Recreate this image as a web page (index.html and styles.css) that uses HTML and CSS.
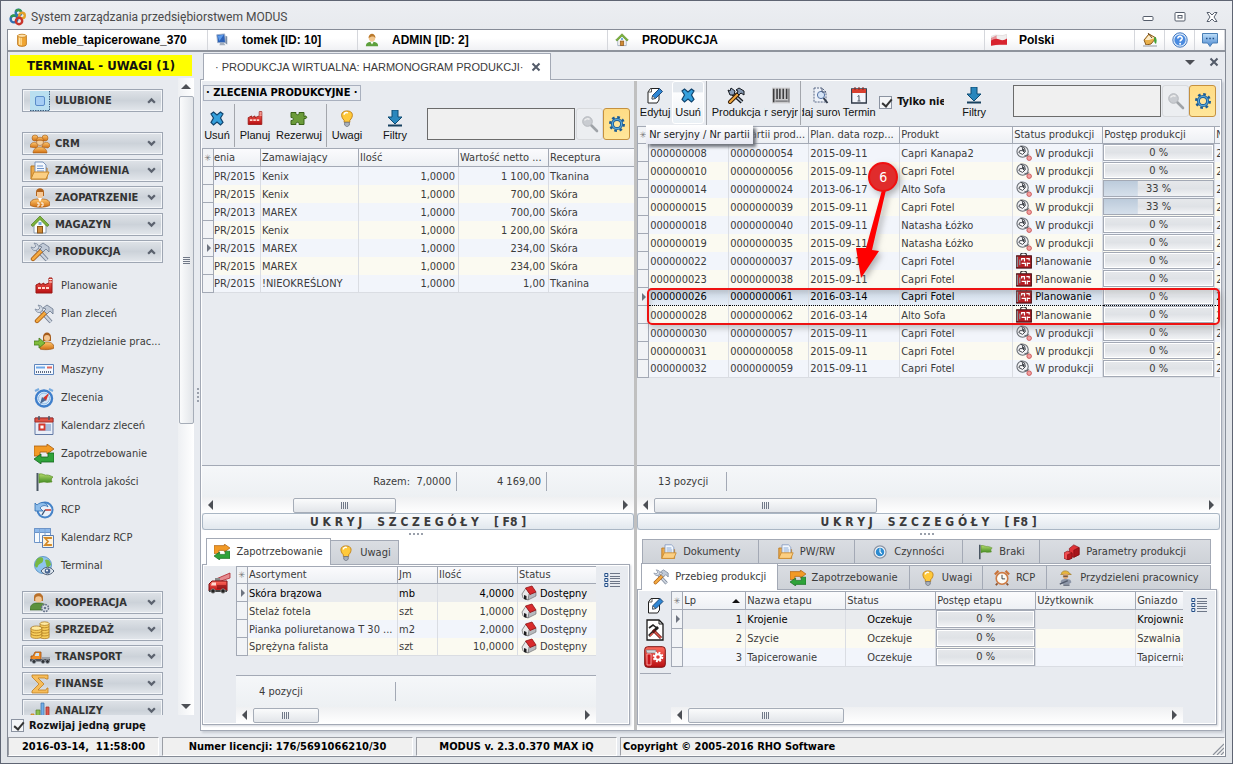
FILE: index.html
```html
<!DOCTYPE html>
<html lang="pl">
<head>
<meta charset="utf-8">
<title>System zarządzania przedsiębiorstwem MODUS</title>
<link rel="stylesheet" href="styles.css">
</head>
<body>
<svg class="defs" aria-hidden="true">
<defs>
<linearGradient id="gO" x1="0" y1="0" x2="0" y2="1"><stop offset="0" stop-color="#ffc870"/><stop offset="1" stop-color="#cf6d10"/></linearGradient>
<linearGradient id="gB" x1="0" y1="0" x2="0" y2="1"><stop offset="0" stop-color="#bfe0fa"/><stop offset="1" stop-color="#4a86cf"/></linearGradient>
<linearGradient id="gR" x1="0" y1="0" x2="0" y2="1"><stop offset="0" stop-color="#ff6a5c"/><stop offset="1" stop-color="#b80f12"/></linearGradient>
<linearGradient id="gG" x1="0" y1="0" x2="0" y2="1"><stop offset="0" stop-color="#b4d96a"/><stop offset="1" stop-color="#3f8a22"/></linearGradient>
</defs>
<symbol id="logo" viewBox="0 0 18 18"><g fill="none" stroke-width="2.4"><circle cx="5" cy="11" r="3.4" stroke="#2c6fb3"/><path d="M2 9a3.6 3.6 0 0 1 5-1" stroke="#2f9a4a"/><circle cx="9.500" cy="4.600" r="2.800" stroke="#2f78b0"/><path d="M7 3.500a2.800 2.800 0 0 1 5 0" stroke="#3a9a45"/><circle cx="13" cy="7.500" r="2.800" stroke="#e2a12a"/><circle cx="10" cy="13" r="3.200" stroke="#c8352c"/></g></symbol>
<symbol id="db" viewBox="0 0 16 16"><path d="M3 3v10c0 3 10 3 10 0V3z" fill="#f0a532" stroke="#b9731a"/><path d="M5 4v9.500M7 4v10" stroke="#ffe2a0" stroke-width="1.500"/><ellipse cx="8" cy="3.200" rx="5" ry="1.800" fill="#ffe3ae" stroke="#c98625"/></symbol>
<symbol id="monitor" viewBox="0 0 16 16"><path d="M2 2l9-1 1 10-9 0z" fill="#2d62b8" stroke="#9fb0c8"/><path d="M3 3l7-1-5 7z" fill="#5d9bea"/><path d="M12 3l2 1v9l-2-1z" fill="#7d8ea6"/><path d="M6 11h4l2 3H5z" fill="#a4aebd"/></symbol>
<symbol id="user" viewBox="0 0 16 16"><path d="M1 15c0-4 3-5 7-5s7 1 7 5z" fill="#5da03c"/><path d="M6 10h4l-2 3z" fill="#fff"/><circle cx="8" cy="6" r="3.600" fill="#f2c78f"/><path d="M4 6c0-7 8-7 8 0-2-3-5-2-8 0z" fill="#b9792c"/></symbol>
<symbol id="home" viewBox="0 0 20 20"><path d="M4 9v9h12V9l-6-6z" fill="#fdfdfb" stroke="#8a9bb0"/><path d="M1 10l9-9 9 9-2 1.500-7-7-7 7z" fill="#7cb23a" stroke="#4c7d1e" stroke-width=".7"/><rect x="7.500" y="11.500" width="5" height="6.500" fill="#cf8a35" stroke="#8a5519"/><rect x="8.500" y="7" width="3" height="3" fill="#78aee2"/></symbol>
<symbol id="pl" viewBox="0 0 17 12"><path d="M.5 2q4-2 8-1t8-1v11q-4 0-8 0t-8 1z" fill="#f0eeee" stroke="#d8cfcf" stroke-width=".6"/><path d="M0 6.500q5-3 9-1t8-1V11q-4 0-8 0t-9 1z" fill="#d8232e"/><path d="M0 4l6-3v4l-6 2z" fill="#d8232e" opacity=".45"/></symbol>
<symbol id="paint" viewBox="0 0 16 16"><path d="M2 8l5-6 7 4-5 6-5 1z" fill="#e9b04a" stroke="#8a5a1b"/><path d="M3 8l4-5 6 3-6 2z" fill="#fbeccb"/><path d="M12 5c3 0 3 4 2 7-2-1-2-3-2-7z" fill="#44a338"/><path d="M6 1l4 5" stroke="#6b4a23"/><path d="M1 14h14" stroke="#c5c8cd" stroke-width="2"/></symbol>
<symbol id="help" viewBox="0 0 16 16"><circle cx="8" cy="8" r="7.200" fill="#dcebfa" stroke="#4277bf"/><circle cx="8" cy="8" r="5.600" fill="#4b8be0"/><path d="M5.800 6.500c0-3 4.600-2.600 4.400 0-.1 1.500-2.100 1.500-2.100 3" fill="none" stroke="#fff" stroke-width="1.600"/><circle cx="8.100" cy="11.700" r="1" fill="#fff"/></symbol>
<symbol id="chat" viewBox="0 0 16 16"><path d="M.5 1.500h15v9.500h-5l-2.500 3.500L5.500 11h-5z" fill="url(#gB)" stroke="#4a7fb5"/><path d="M4 6.500h1.500M7.300 6.500h1.500M10.600 6.500h1.500" stroke="#1f4f86" stroke-width="1.600"/></symbol>
<symbol id="square" viewBox="0 0 20 20"><rect width="20" height="20" fill="#b9dff0"/><path d="M0 19.500h20M19.500 0v20" stroke="#3d5d80" stroke-dasharray="1.500 1"/><rect x="5.500" y="5.500" width="9" height="9" rx="1.500" fill="#a5cdf4" stroke="#5a8cc9"/></symbol>
<symbol id="people" viewBox="0 0 20 20"><g fill="url(#gO)" stroke="#a35a18" stroke-width=".6"><circle cx="5" cy="4" r="3"/><circle cx="15" cy="4" r="3"/><path d="M0 13c0-6 8-6 8-1l-2 2zM12 13c0-6 8-6 8-1l-2 2z"/><circle cx="10" cy="8" r="3.500" fill="#f4cf9d"/><path d="M6 7c0-5 8-5 8 0-3-1-5-1-8 0z"/><path d="M3 19c0-8 14-8 14 0z"/></g></symbol>
<symbol id="folder" viewBox="0 0 20 20"><path d="M1 5h5l1 2h10v11H1z" fill="#e9a94c" stroke="#b9771c"/><path d="M5 1h8l3 3v10H5z" fill="#f4f8fd" stroke="#7d96bd"/><path d="M7 5h6M7 7.500h7M7 10h7" stroke="#6f94cc"/><path d="M1 18l3-7h15l-3 7z" fill="#fbcf83" stroke="#c9882b"/></symbol>
<symbol id="boxman" viewBox="0 0 20 20"><path d="M6 4c0-5 8-5 8 0v4H6z" fill="#b2641d"/><path d="M7 4h6v4c0 3-6 3-6 0z" fill="#f6c895"/><path d="M0 17c0-6 5-6 10-6s10 0 10 6c-3 3-17 3-20 0z" fill="url(#gO)" stroke="#a35a18" stroke-width=".7"/><path d="M8 10h4l-2 4z" fill="#fff"/><path d="M7 15h2v3H7M11 15h2v3h-2" stroke="#fff" fill="none"/></symbol>
<symbol id="tools" viewBox="0 0 20 20"><path d="M5 5l12 13" stroke="#6e7a8e" stroke-width="4"/><path d="M5 5l12 13" stroke="#cdd4de" stroke-width="2.400"/><path d="M1 5q2 5 6 3l2-3q-1-4-5-4l2 3-2 2z" fill="#d3dae4" stroke="#7c899d" stroke-width=".8"/><path d="M12 8l-9 9" stroke="#a55a12" stroke-width="4.400" stroke-linecap="round"/><path d="M12 8l-9 9" stroke="#f3a940" stroke-width="2.800" stroke-linecap="round"/><path d="M9 4l4-3 6 4v5l-3-3-3 3-3-3 2-2z" fill="#c1cad7" stroke="#69778d" stroke-width=".8"/></symbol>
<symbol id="toolsdark" viewBox="0 0 18 17"><path d="M4 5l11 10" stroke="#15181d" stroke-width="4"/><path d="M4 5l11 10" stroke="#b9c4d2" stroke-width="1.600"/><path d="M1 3l2 1 1-3 4 3-1 4-4 0z" fill="#8fa3bd" stroke="#15181d"/><path d="M11 7l-8 8" stroke="#3b2006" stroke-width="4" stroke-linecap="round"/><path d="M11 7l-8 8" stroke="#f3a940" stroke-width="2" stroke-linecap="round"/><path d="M9 3l3-2 5 3v4l-3-2-2 2-2-2 1-2z" fill="#8497b0" stroke="#15181d"/></symbol>
<symbol id="coop" viewBox="0 0 20 20"><path d="M10 0l3 4-5-1z" fill="#b56a20"/><path d="M4 4c0-5 9-5 9 1v3H4z" fill="#b9702a"/><circle cx="8.500" cy="6.500" r="3.300" fill="#f2c694"/><path d="M0 17c0-7 5-7 9-7s8 1 8 7z" fill="#5c913c" stroke="#36661f" stroke-width=".6"/><circle cx="15" cy="15" r="3.500" fill="#dce1e8" stroke="#66738a" stroke-width="1.600" stroke-dasharray="1.800 .9"/><circle cx="15" cy="15" r="1.300" fill="#6a7890"/></symbol>
<symbol id="coins" viewBox="0 0 22 20"><g fill="#f7cd5c" stroke="#a8741a" stroke-width=".8"><path d="M11 3v15c0 2 10 2 10 0V3z"/><ellipse cx="16" cy="3" rx="5" ry="2" fill="#ffeaa0"/><path d="M11 6c1 2 9 2 10 0M11 9c1 2 9 2 10 0M11 12c1 2 9 2 10 0M11 15c1 2 9 2 10 0" fill="none"/><path d="M1 8v9c0 3 12 3 12 0V8z"/><ellipse cx="7" cy="8" rx="6" ry="2.400" fill="#ffeaa0"/><path d="M1 11c1 3 11 3 12 0M1 14c1 3 11 3 12 0" fill="none"/></g></symbol>
<symbol id="truck" viewBox="0 0 20 20"><path d="M1 9h2l2-4h6v8H1z" fill="#ef8c25" stroke="#9c4d10" stroke-width=".8"/><path d="M5 8l1-2h3v3H5z" fill="#cfe4f4"/><path d="M0 12h20v2.500H0z" fill="#50545c"/><path d="M12 11h8" stroke="#8b9099" stroke-width="1.500"/><g fill="#2f3338" stroke="#9ba1aa" stroke-width=".8"><circle cx="4" cy="14.500" r="2"/><circle cx="13" cy="14.500" r="2"/><circle cx="17.500" cy="14.500" r="2"/></g></symbol>
<symbol id="sigma" viewBox="0 0 20 20"><path d="M2 1h16v4h-2l-1-1H8l6 6-6 6h8l1-2h1v5H2v-2l7-7-7-7z" fill="#f6bd5b" stroke="#c07d20" stroke-width=".8"/></symbol>
<symbol id="chart" viewBox="0 0 20 20"><g stroke-width=".7"><path d="M1 13h3v7H1z" fill="#f0b040" stroke="#b87a18"/><path d="M6 9h4v11H6z" fill="#8dc04c" stroke="#55822a"/><path d="M11 2h3v18h-3z" fill="#74b0e8" stroke="#3a6ea8"/><path d="M16 6h3v14h-3z" fill="#dd5a50" stroke="#a0241e"/></g></symbol>
<symbol id="factory" viewBox="0 0 20 20"><path d="M2 17V9l4-2v2l4-2v2l5-2V2h3v15z" fill="url(#gR)" stroke="#9a1612"/><path d="M4 12h11" stroke="#ffd6cc" stroke-width="2" stroke-dasharray="3 1"/><path d="M15 3.500h3M15 6h3" stroke="#ffe6e0"/></symbol>
<symbol id="userarrow" viewBox="0 0 20 20"><path d="M9 5c0-6 8-6 8 0v4H9z" fill="#a65c1c"/><circle cx="13" cy="6" r="3" fill="#f4c591"/><path d="M6 17c0-7 4-7 7-7s7 1 7 6c-2 2-12 2-14 1z" fill="url(#gO)" stroke="#9c5618" stroke-width=".7"/><path d="M0 9h5V6l6 5-6 5v-3H0z" fill="#80bc3c" stroke="#43781a" stroke-width=".8"/></symbol>
<symbol id="machine" viewBox="0 0 20 20"><path d="M.5 4.500h19v10H.5z" fill="#f4f8fe" stroke="#5f86bd"/><path d="M2 7.500h9" stroke="#6ea8e8" stroke-width="2"/><path d="M13 7.500h5" stroke="#e0695e" stroke-width="2"/><path d="M2 12h15" stroke="#2d3c58" stroke-width="1.500" stroke-dasharray="1 1"/></symbol>
<symbol id="compass" viewBox="0 0 20 20"><circle cx="10" cy="10.500" r="8" fill="#eaf3fc" stroke="#3f7fcb" stroke-width="2.400"/><circle cx="10" cy="10.500" r="5.500" fill="#d3e6f8" stroke="#8bb8e5"/><path d="M15 5l-3 8-3-3z" fill="#d93328"/><path d="M6 16l2-7 4 3z" fill="#4a6893"/><path d="M1 3l4-2M15 1l4 2" stroke="#77abdf" stroke-width="2"/></symbol>
<symbol id="cal" viewBox="0 0 20 20"><path d="M1 2h18v16.500H1z" fill="#e8eef8" stroke="#6279a5"/><path d="M1 2h18v4H1z" fill="#de5245" stroke="#a92e26"/><path d="M5 0v4M15 0v4" stroke="#4c5564" stroke-width="1.500"/><path d="M4 8h13v7H4z" fill="#a8bbda"/><path d="M5.500 8.500h5v5h-5z" fill="#fff" stroke="#d5382d" stroke-width="1.800"/></symbol>
<symbol id="swap" viewBox="0 0 20 20"><path d="M0 12V2h13V0l7 5-7 5V8H6v4z" fill="#f29a26" stroke="#a75c0c" stroke-width=".8"/><path d="M20 9v9H7v2l-7-5 7-5v3h7V9z" fill="#2fa33a" stroke="#14661d" stroke-width=".8"/></symbol>
<symbol id="flag" viewBox="0 0 20 20"><path d="M3.500 1v18" stroke="#4a5663" stroke-width="2"/><path d="M5 2c4-1 6 2 8 1 2 0 4 1 6 2-2 1-2 3-1 5-3 0-5 1-7 0-2 0-4 0-6 1z" fill="url(#gG)" stroke="#5a8f28" stroke-width=".7"/></symbol>
<symbol id="rcp" viewBox="0 0 20 20"><circle cx="11" cy="10" r="7.500" fill="#e9f1fa" stroke="#4583c8" stroke-width="2"/><path d="M11 10h6" stroke="#c8382e" stroke-width="1.500"/><path d="M11 10l-3 5" stroke="#3d5778" stroke-width="1.400"/><path d="M1 3v8h8L6 8c2-3 6-3 8-1-1-5-7-6-11-2z" fill="#8dbdeb" stroke="#2f6cb0" stroke-width=".8"/></symbol>
<symbol id="tsum" viewBox="0 0 20 20"><path d="M.5.500h16v14H.5z" fill="#f7fafd" stroke="#6d94c8"/><path d="M.5.500h16v4H.500z" fill="#8db8ea" stroke="#6d94c8"/><path d="M5.500 1v13M11 1v13" stroke="#7fa5d4"/><path d="M8.500 7.500h11v12h-11z" fill="#fdf3df" stroke="#5a7db2"/><path d="M17 11v-1h-6l3 3.500-3 3.500h6v-1" fill="none" stroke="#d48a28" stroke-width="1.800"/></symbol>
<symbol id="globe" viewBox="0 0 20 20"><circle cx="9" cy="9" r="8.500" fill="#8ec4ee" stroke="#4d88be" stroke-width=".8"/><path d="M4 2c4-2 6 0 5 3s-4 2-5 5-3 1-3-1 1-5 3-7zM11 4c3-2 6 2 6 5l-4 3z" fill="#77b843"/><path d="M7 15c4-5 9-5 13 0-4 5-9 5-13 0z" fill="#dfe7ef" stroke="#4c5d73"/><circle cx="13.500" cy="15" r="2.800" fill="#4a6792"/><circle cx="13" cy="14.500" r="1" fill="#fff"/></symbol>
<symbol id="xblue" viewBox="0 0 18 17"><path d="M3 4l2.500-2 3.500 3 3.500-3L15 4l-2.500 4L15 12.500 12.500 15 9 12l-3.500 3L3 12.500 5.500 8z" fill="#35a0dc" stroke="#11456f" stroke-width="1.200"/></symbol>
<symbol id="puzzle" viewBox="0 0 18 16"><path d="M1 2h5c-1 3 4 3 3 0h5v4c3-2 4 3 0 2v6H9c1-3-4-3-3 0H1v-4c3 1 3-4 0-3z" fill="#6b9b3a" stroke="#3b6219"/></symbol>
<symbol id="bulb" viewBox="0 0 16 18"><path d="M8 1c7 0 7 6 3 10v2H5v-2C1 7 1 1 8 1z" fill="#ffc93a" stroke="#c07f14"/><path d="M5 5c0-2 2-3 4-2" stroke="#fff" stroke-width="1.600" fill="none"/><path d="M5.500 13h5v3l-2 1.500h-1L5.500 16z" fill="#a9b0bb" stroke="#666d78" stroke-width=".8"/></symbol>
<symbol id="filter" viewBox="0 0 16 17"><path d="M5 0h6v7h4l-7 7-7-7h4z" fill="#2a87bd" stroke="#0d4a72"/><path d="M1 15.500h14" stroke="#17415f" stroke-width="1.800"/></symbol>
<symbol id="search" viewBox="0 0 18 18"><path d="M10 10l6 6" stroke="#9fa3a8" stroke-width="2.600" stroke-linecap="round"/><circle cx="6.500" cy="6.500" r="4.800" fill="#c9ccd1" stroke="#b5b8bd"/><path d="M3.500 5.500c1-2 4-2 5-1" stroke="#eee" fill="none" stroke-width="1.500"/></symbol>
<symbol id="gear" viewBox="0 0 18 18"><circle cx="9" cy="9" r="6.800" fill="none" stroke="#1c5c93" stroke-width="2.400" stroke-dasharray="2.700 2.640"/><circle cx="9" cy="9" r="4.600" fill="#ffe49a" stroke="#1e5f99" stroke-width="3"/><circle cx="9" cy="9" r="4.600" fill="none" stroke="#57a8dc" stroke-width="1.200"/></symbol>
<symbol id="edit" viewBox="0 0 17 17"><path d="M4 1.500h8.500V13l-2 3H1.500V5z" fill="#fff" stroke="#202020"/><path d="M1.500 5H5V1.500" fill="none" stroke="#555"/><path d="M6 8.500l7-7 3 3-7 7-3.500.6z" fill="#2f86d3" stroke="#123e70" stroke-width=".9"/><path d="M5.500 12l.6-3 2.500 2.500z" fill="#fff" stroke="#333" stroke-width=".6"/></symbol>
<symbol id="barcode" viewBox="0 0 16 14"><rect width="16" height="14" fill="#c9c9cb"/><path d="M1.500 1v12M4.500 1v9M7 1v9M10 1v9M13 1v9" stroke="#3c3c3e" stroke-width="1.400"/><path d="M15 1v12M3 12h11" stroke="#707074"/></symbol>
<symbol id="docsearch" viewBox="0 0 16 17"><path d="M1 1h8l4 4v10H1z" fill="#edf1f8" stroke="#5a6985" stroke-dasharray="2 1"/><circle cx="8" cy="8" r="3.600" fill="#d5e4f6" stroke="#5573a4"/><path d="M10.500 11l4 5" stroke="#333d4d" stroke-width="2"/><path d="M9 1v4h4" fill="none" stroke="#4a5670"/></symbol>
<symbol id="cal1" viewBox="0 0 16 17"><path d="M.7 2h14.600v14H.7z" fill="#f4f6fb" stroke="#2d3746" stroke-width="1.300"/><path d="M1 2h14v4H1z" fill="#d8402f"/><path d="M4 0v3M8 0v3M12 0v3" stroke="#8c1d14"/><path d="M6.500 9.500L8 8.500V14M6.500 14h3" stroke="#4a5463" fill="none"/></symbol>
<symbol id="wrench" viewBox="0 0 17 17"><circle cx="7" cy="7" r="6" fill="#f1f2f5" stroke="#6c7178" stroke-width="1.200"/><path d="M5 1l4 2 1 4-3 3-4-2 1-2 3 0 0-3z" fill="#fff" stroke="#3a3e45"/><path d="M7 4.500q2 1 1 3" stroke="#3f434a" stroke-width="1.800" fill="none"/><path d="M9 11q2 2 5-1" fill="none" stroke="#55595f"/><circle cx="14" cy="14" r="2.400" fill="#f2a0a0" stroke="#c95858"/></symbol>
<symbol id="plan" viewBox="0 0 17 17"><path d="M5 3V1q3-2 6 0v2" fill="none" stroke="#333" stroke-width="1.200"/><rect x=".7" y="3" width="15.600" height="13" fill="#b51e24" stroke="#4b1014" stroke-width="1.200"/><path d="M1.500 4v11M4 7v6" stroke="#8b8f96" stroke-width="1.500"/><path d="M6 8V6h3v3M11 6h3v2M6 11h4v3M12 10v4M12 11h3" fill="none" stroke="#fff" stroke-width="1.300"/></symbol>
<symbol id="house" viewBox="0 0 16 16"><path d="M1 9l4-6 4 6-2 6-5-2z" fill="#e9e9ea" stroke="#666" stroke-width=".7"/><path d="M8 9l7-2v4l-8 4z" fill="#b7babf" stroke="#666" stroke-width=".6"/><path d="M4.500 3L11 1l4 6-6 2.500z" fill="#d82b2d" stroke="#8f1316" stroke-width=".8"/><path d="M3 10l2.500 1v4L3 14z" fill="#1d1d1f"/></symbol>
<symbol id="fire" viewBox="0 0 24 22"><path d="M8 7L22 1v5L10 10z" fill="#e58a90" stroke="#b1262c" stroke-width=".8"/><path d="M7 6h5v5H7z" fill="#888"/><path d="M1 12l3-3h15v10H1z" fill="url(#gR)" stroke="#7c0d10"/><path d="M4 10.500h4v3H3z" fill="#ffd9d2"/><path d="M9 14h9M9 16h9" stroke="#6e090c"/><path d="M1 18h18v2H1z" fill="#444"/><circle cx="5" cy="19" r="2.200" fill="#222" stroke="#999" stroke-width=".8"/><circle cx="15" cy="19" r="2.200" fill="#222" stroke="#999" stroke-width=".8"/></symbol>
<symbol id="list" viewBox="0 0 16 16"><g fill="#e8f1fb" stroke="#234d86"><path d="M.8 1.500h3v3h-3zM.8 6.500h3v3h-3zM.8 11.500h3v3h-3z"/></g><path d="M6 1.500h10M6 4.500h10M6 6.500h10M6 9.500h10M6 11.500h10M6 14.500h10" stroke="#6e7788"/></symbol>
<symbol id="doctool" viewBox="0 0 18 22"><path d="M1 1h12l4 4v16H1z" fill="#fff" stroke="#1a1a1a" stroke-width="1.300"/><path d="M13 1v4h4" fill="none" stroke="#1a1a1a"/><path d="M3 17l9-9" stroke="#222" stroke-width="2.600"/><path d="M3 9l4-3 5 4" stroke="#222" stroke-width="1.600" fill="none"/><path d="M7 11l8 8" stroke="#601510" stroke-width="3"/><path d="M9 13l6 6M4 17l3-3" stroke="#e0564c" stroke-width="1.600"/></symbol>
<symbol id="redgear" viewBox="0 0 22 22"><rect x=".7" y=".7" width="20.600" height="20.600" rx="3" fill="url(#gR)" stroke="#7c1212"/><path d="M2 4h10v3H3z" fill="#d4d6da" stroke="#777" stroke-width=".6"/><path d="M3 8h4v11H3z" fill="#c8141a" stroke="#fbb" stroke-width=".8"/><circle cx="14" cy="11" r="4.200" fill="none" stroke="#fff" stroke-width="2.200" stroke-dasharray="1.800 1.500"/><circle cx="14" cy="11" r="2.800" fill="none" stroke="#fff" stroke-width="2"/></symbol>
<symbol id="alarm" viewBox="0 0 18 18"><path d="M1 5l4-4M17 5l-4-4" stroke="#c9743a" stroke-width="2.600"/><path d="M4 15l-2 2M14 15l2 2" stroke="#8a5330" stroke-width="2"/><circle cx="9" cy="9.500" r="6.500" fill="#fbfbf6" stroke="#ce7a42" stroke-width="1.800"/><path d="M9 5.500v4.500h3.500" fill="none" stroke="#333"/></symbol>
<symbol id="cubes" viewBox="0 0 18 18"><g stroke="#7c0c10" stroke-width=".7"><path d="M6 5l5-4 6 3v8l-6 3-5-3z" fill="#e03237"/><path d="M11 7l6-3v8l-6 3z" fill="#a8151b"/><path d="M0 10l4-2 5 2v6l-5 2-4-2z" fill="#f05053"/><path d="M4 12l5-2v6l-5 2z" fill="#b8181e"/></g></symbol>
<symbol id="worker" viewBox="0 0 18 18"><path d="M4 4c0-4 8-4 9 0l2 1H3z" fill="#e7b63a" stroke="#9c7418" stroke-width=".7"/><circle cx="8.500" cy="7" r="3" fill="#dba372"/><path d="M6 7h5" stroke="#333"/><path d="M3 14c0-4 4-4 6-4s6 0 6 4l-3 2H6z" fill="#8d96a8"/><path d="M2 16l9-4M6 17h7" stroke="#515a6c" stroke-width="1.500"/></symbol>
<symbol id="clock" viewBox="0 0 18 18"><circle cx="9" cy="9" r="6.800" fill="#f3f6fa" stroke="#8b95a5" stroke-width="1.400"/><circle cx="9" cy="9" r="4.800" fill="#2c8bd0"/><path d="M9 5v4l2 2" stroke="#fff" stroke-width="1.200" fill="none"/></symbol>
<symbol id="chev" viewBox="0 0 8 8"><path d="M1 2l3 3 3-3" fill="none" stroke="#5b626e" stroke-width="2"/></symbol>
<symbol id="close" viewBox="0 0 10 10"><path d="M1.500 1.500l7 7M8.500 1.500l-7 7" stroke="#535b69" stroke-width="2"/></symbol>
</svg>

<div class="window">
<header class="titlebar">
  <svg class="i18"><use href="#logo"/></svg><h1>System zarządzania przedsiębiorstwem MODUS</h1>
  <div class="winbtns">
    <button aria-label="Minimalizuj"><svg viewBox="0 0 12 12"><rect x="1" y="5.500" width="10" height="4" rx="1" fill="#fff" stroke="#555d6b"/></svg></button>
    <button aria-label="Maksymalizuj"><svg viewBox="0 0 12 12"><rect x="1" y="1.500" width="10" height="8.500" rx="1" fill="#fff" stroke="#555d6b"/><rect x="4" y="4.500" width="4" height="2.500" fill="#fff" stroke="#555d6b"/></svg></button>
    <button aria-label="Zamknij"><svg viewBox="0 0 12 12"><path d="M1 1.500h2.500L6 4l2.500-2.500H11L8 6l3 4.500H8.500L6 8l-2.500 2.500H1L4 6z" fill="#fff" stroke="#555d6b"/></svg></button>
  </div>
</header>
<div class="frame">
<div class="infobar">
  <div class="inf w200"><svg><use href="#db"/></svg><b>meble_tapicerowane_370</b></div>
  <div class="inf w150"><svg><use href="#monitor"/></svg><b>tomek [ID: 10]</b></div>
  <div class="inf w250"><svg><use href="#user"/></svg><b>ADMIN [ID: 2]</b></div>
  <div class="inf grow"><svg><use href="#home"/></svg><b>PRODUKCJA</b></div>
  <div class="inf w150"><svg><use href="#pl"/></svg><b>Polski</b></div>
  <button aria-label="Kolor"><svg><use href="#paint"/></svg></button>
  <button aria-label="Pomoc"><svg><use href="#help"/></svg></button>
  <button aria-label="Wiadomości"><svg><use href="#chat"/></svg></button>
</div>

<div class="body">
<aside class="sidebar">
  <div class="notice">TERMINAL - UWAGI (1)</div>
  <div class="navwrap">
  <nav>
    <button class="group first"><svg><use href="#square"/></svg>ULUBIONE<svg class="chev up"><use href="#chev"/></svg></button>
    <button class="group"><svg><use href="#people"/></svg>CRM<svg class="chev"><use href="#chev"/></svg></button>
    <button class="group"><svg><use href="#folder"/></svg>ZAMÓWIENIA<svg class="chev"><use href="#chev"/></svg></button>
    <button class="group"><svg><use href="#boxman"/></svg>ZAOPATRZENIE<svg class="chev"><use href="#chev"/></svg></button>
    <button class="group"><svg><use href="#home"/></svg>MAGAZYN<svg class="chev"><use href="#chev"/></svg></button>
    <button class="group"><svg><use href="#tools"/></svg>PRODUKCJA<svg class="chev up"><use href="#chev"/></svg></button>
    <ul>
      <li><a href="#"><svg><use href="#factory"/></svg>Planowanie</a></li>
      <li><a href="#"><svg><use href="#tools"/></svg>Plan zleceń</a></li>
      <li><a href="#"><svg><use href="#userarrow"/></svg>Przydzielanie prac...</a></li>
      <li><a href="#"><svg><use href="#machine"/></svg>Maszyny</a></li>
      <li><a href="#"><svg><use href="#compass"/></svg>Zlecenia</a></li>
      <li><a href="#"><svg><use href="#cal"/></svg>Kalendarz zleceń</a></li>
      <li><a href="#"><svg><use href="#swap"/></svg>Zapotrzebowanie</a></li>
      <li><a href="#"><svg><use href="#flag"/></svg>Kontrola jakości</a></li>
      <li><a href="#"><svg><use href="#rcp"/></svg>RCP</a></li>
      <li><a href="#"><svg><use href="#tsum"/></svg>Kalendarz RCP</a></li>
      <li><a href="#"><svg><use href="#globe"/></svg>Terminal</a></li>
    </ul>
    <button class="group"><svg><use href="#coop"/></svg>KOOPERACJA<svg class="chev"><use href="#chev"/></svg></button>
    <button class="group"><svg><use href="#coins"/></svg>SPRZEDAŻ<svg class="chev"><use href="#chev"/></svg></button>
    <button class="group"><svg><use href="#truck"/></svg>TRANSPORT<svg class="chev"><use href="#chev"/></svg></button>
    <button class="group"><svg><use href="#sigma"/></svg>FINANSE<svg class="chev"><use href="#chev"/></svg></button>
    <button class="group"><svg><use href="#chart"/></svg>ANALIZY<svg class="chev"><use href="#chev"/></svg></button>
  </nav>
  <div class="vscroll"><i class="tri tu"></i><div class="vthumb"></div><i class="tri td"></i></div>
  </div>
  <label class="check one"><input type="checkbox" checked>Rozwijaj jedną grupę</label>
</aside>
<div class="vgrip"></div>

<main>
<div class="tabstrip">
  <div class="doctab">· PRODUKCJA WIRTUALNA: HARMONOGRAM PRODUKCJI·<button aria-label="Zamknij kartę"><svg><use href="#close"/></svg></button></div>
  <div class="tabend"><i class="tri td"></i><button aria-label="Zamknij"><svg><use href="#close"/></svg></button></div>
</div>
<div class="panels">

<section class="panel left">
  <h2>· ZLECENIA PRODUKCYJNE ·</h2>
  <div class="toolbar tl">
    <button class="tb w30"><svg><use href="#xblue"/></svg><span>Usuń</span></button><i class="sep"></i>
    <button class="tb w38"><svg><use href="#factory"/></svg><span>Planuj</span></button>
    <button class="tb w50"><svg><use href="#puzzle"/></svg><span>Rezerwuj</span></button><i class="sep"></i>
    <button class="tb w38"><svg><use href="#bulb"/></svg><span>Uwagi</span></button>
    <button class="tb w58"><svg><use href="#filter"/></svg><span>Filtry</span></button>
    <div class="find"><input type="text" aria-label="Szukaj zlecenia"><button class="sb" aria-label="Szukaj"><svg><use href="#search"/></svg></button><button class="gb" aria-label="Ustawienia"><svg><use href="#gear"/></svg></button></div>
  </div>
  <div class="grid">
  <table>
    <colgroup><col class="c12"><col class="c47"><col class="c98"><col class="c100"><col class="c90"><col></colgroup>
    <thead><tr><th class="ind">✳</th><th class="cut">enia</th><th>Zamawiający</th><th>Ilość</th><th>Wartość netto ...</th><th>Receptura</th></tr></thead>
    <tbody>
      <tr><td class="ind"></td><td class="cut">PR/2015</td><td>Kenix</td><td class="r">1,0000</td><td class="r">1 100,00</td><td>Tkanina</td></tr>
      <tr><td class="ind"></td><td class="cut">PR/2015</td><td>Kenix</td><td class="r">1,0000</td><td class="r">700,00</td><td>Skóra</td></tr>
      <tr><td class="ind"></td><td class="cut">PR/2013</td><td>MAREX</td><td class="r">1,0000</td><td class="r">700,00</td><td>Skóra</td></tr>
      <tr><td class="ind"></td><td class="cut">PR/2015</td><td>Kenix</td><td class="r">1,0000</td><td class="r">1 200,00</td><td>Skóra</td></tr>
      <tr><td class="ind cur"></td><td class="cut">PR/2015</td><td>MAREX</td><td class="r">1,0000</td><td class="r">234,00</td><td>Skóra</td></tr>
      <tr><td class="ind"></td><td class="cut">PR/2015</td><td>MAREX</td><td class="r">1,0000</td><td class="r">234,00</td><td>Skóra</td></tr>
      <tr><td class="ind"></td><td class="cut">PR/2015</td><td>!NIEOKREŚLONY</td><td class="r">1,0000</td><td class="r">1,00</td><td>Tkanina</td></tr>
    </tbody>
  </table>
  </div>
  <div class="sum"><span class="s1">Razem:&nbsp; 7,0000</span><span class="s2">4 169,00</span></div>
  <div class="hscroll"><i class="tri tl-a"></i><div class="thumb h1"></div><i class="tri tr-a"></i></div>
  <button class="hide">U K R Y J &nbsp;&nbsp; S Z C Z E G Ó Ł Y &nbsp;&nbsp; [ F8 ]</button>
  <div class="details">
    <div class="hgrip"></div>
    <div class="tabs one-row">
      <button class="tab on w125"><svg><use href="#swap"/></svg>Zapotrzebowanie</button>
      <button class="tab w68"><svg><use href="#bulb"/></svg>Uwagi</button>
    </div>
    <div class="box">
      <div class="side"><svg class="i24"><use href="#fire"/></svg></div>
      <div class="inner">
        <div class="grid">
        <table>
          <colgroup><col class="c12"><col class="c150"><col class="c40"><col class="c80"><col></colgroup>
          <thead><tr><th class="ind">✳</th><th>Asortyment</th><th>Jm</th><th>Ilość</th><th>Status</th></tr></thead>
          <tbody>
            <tr class="focus"><td class="ind cur"></td><td>Skóra brązowa</td><td>mb</td><td class="r">4,0000</td><td class="st"><svg><use href="#house"/></svg>Dostępny</td></tr>
            <tr><td class="ind"></td><td>Stelaż fotela</td><td>szt</td><td class="r">1,0000</td><td class="st"><svg><use href="#house"/></svg>Dostępny</td></tr>
            <tr><td class="ind"></td><td>Pianka poliuretanowa T 30 ...</td><td>m2</td><td class="r">2,0000</td><td class="st"><svg><use href="#house"/></svg>Dostępny</td></tr>
            <tr><td class="ind"></td><td>Sprężyna falista</td><td>szt</td><td class="r">10,0000</td><td class="st"><svg><use href="#house"/></svg>Dostępny</td></tr>
          </tbody>
        </table>
        </div>
        <div class="sum"><span class="s4">4 pozycji</span></div>
        <div class="hscroll"><i class="tri tl-a"></i><div class="thumb h3"></div><i class="tri tr-a"></i></div>
      </div>
      <div class="side"><svg class="i16"><use href="#list"/></svg></div>
    </div>
  </div>
</section>

<section class="panel right">
  <div class="toolbar tr">
    <button class="tb w34"><svg><use href="#edit"/></svg><span>Edytuj</span></button>
    <button class="tb w32 hot"><svg><use href="#xblue"/></svg><span>Usuń</span></button><i class="sep"></i>
    <button class="tb w56"><svg><use href="#toolsdark"/></svg><span>Produkcja</span></button>
    <button class="tb w34"><svg><use href="#barcode"/></svg><span>Nr seryjny</span></button><i class="sep"></i>
    <button class="tb w38"><svg><use href="#docsearch"/></svg><span>Podaj surowce</span></button>
    <button class="tb w38"><svg><use href="#cal1"/></svg><span>Termin</span></button>
    <label class="check clip"><input type="checkbox" checked>Tylko niezakończone</label>
    <button class="tb w58"><svg><use href="#filter"/></svg><span>Filtry</span></button>
    <div class="find"><input type="text" aria-label="Szukaj produkcji"><button class="sb" aria-label="Szukaj"><svg><use href="#search"/></svg></button><button class="gb" aria-label="Ustawienia"><svg><use href="#gear"/></svg></button></div>
  </div>
  <div class="grid">
  <table>
    <colgroup><col class="c12"><col class="c80"><col class="c80"><col class="c91"><col class="c113"><col class="c90"><col class="c112"><col></colgroup>
    <thead><tr><th class="ind">✳</th><th aria-label="Nr seryjny"></th><th class="r">artii prod...</th><th>Plan. data rozp...</th><th>Produkt</th><th>Status produkcji</th><th>Postęp produkcji</th><th>N</th></tr></thead>
    <tbody>
      <tr><td class="ind"></td><td>000000008</td><td>0000000054</td><td>2015-09-11</td><td>Capri Kanapa2</td><td class="st"><svg><use href="#wrench"/></svg>W produkcji</td><td class="pc"><div class="bar">0 %</div></td><td>2</td></tr>
      <tr><td class="ind"></td><td>000000010</td><td>0000000056</td><td>2015-09-11</td><td>Capri Fotel</td><td class="st"><svg><use href="#wrench"/></svg>W produkcji</td><td class="pc"><div class="bar">0 %</div></td><td>2</td></tr>
      <tr><td class="ind"></td><td>000000014</td><td>0000000024</td><td>2013-06-17</td><td>Alto Sofa</td><td class="st"><svg><use href="#wrench"/></svg>W produkcji</td><td class="pc"><div class="bar third">33 %</div></td><td>2</td></tr>
      <tr><td class="ind"></td><td>000000015</td><td>0000000039</td><td>2015-09-11</td><td>Capri Fotel</td><td class="st"><svg><use href="#wrench"/></svg>W produkcji</td><td class="pc"><div class="bar third">33 %</div></td><td>2</td></tr>
      <tr><td class="ind"></td><td>000000018</td><td>0000000040</td><td>2015-09-11</td><td>Natasha Łóżko</td><td class="st"><svg><use href="#wrench"/></svg>W produkcji</td><td class="pc"><div class="bar">0 %</div></td><td>2</td></tr>
      <tr><td class="ind"></td><td>000000019</td><td>0000000035</td><td>2015-09-11</td><td>Natasha Łóżko</td><td class="st"><svg><use href="#wrench"/></svg>W produkcji</td><td class="pc"><div class="bar">0 %</div></td><td>2</td></tr>
      <tr><td class="ind"></td><td>000000022</td><td>0000000037</td><td>2015-09-11</td><td>Capri Fotel</td><td class="st"><svg><use href="#plan"/></svg>Planowanie</td><td class="pc"><div class="bar">0 %</div></td><td>2</td></tr>
      <tr><td class="ind"></td><td>000000023</td><td>0000000038</td><td>2015-09-11</td><td>Capri Fotel</td><td class="st"><svg><use href="#plan"/></svg>Planowanie</td><td class="pc"><div class="bar">0 %</div></td><td>2</td></tr>
      <tr class="sel"><td class="ind cur"></td><td>000000026</td><td>0000000061</td><td>2016-03-14</td><td>Capri Fotel</td><td class="st"><svg><use href="#plan"/></svg>Planowanie</td><td class="pc"><div class="bar">0 %</div></td><td>2</td></tr>
      <tr><td class="ind"></td><td>000000028</td><td>0000000062</td><td>2016-03-14</td><td>Alto Sofa</td><td class="st"><svg><use href="#plan"/></svg>Planowanie</td><td class="pc"><div class="bar">0 %</div></td><td>2</td></tr>
      <tr><td class="ind"></td><td>000000030</td><td>0000000057</td><td>2015-09-11</td><td>Capri Fotel</td><td class="st"><svg><use href="#wrench"/></svg>W produkcji</td><td class="pc"><div class="bar">0 %</div></td><td>2</td></tr>
      <tr><td class="ind"></td><td>000000031</td><td>0000000058</td><td>2015-09-11</td><td>Capri Fotel</td><td class="st"><svg><use href="#wrench"/></svg>W produkcji</td><td class="pc"><div class="bar">0 %</div></td><td>2</td></tr>
      <tr><td class="ind"></td><td>000000032</td><td>0000000059</td><td>2015-09-11</td><td>Capri Fotel</td><td class="st"><svg><use href="#wrench"/></svg>W produkcji</td><td class="pc"><div class="bar">0 %</div></td><td>2</td></tr>
    </tbody>
  </table>
  </div>
  <div class="sum"><span class="s3">13 pozycji</span></div>
  <div class="hscroll"><i class="tri tl-a"></i><div class="thumb h2"></div><i class="tri tr-a"></i></div>
  <button class="hide">U K R Y J &nbsp;&nbsp; S Z C Z E G Ó Ł Y &nbsp;&nbsp; [ F8 ]</button>
  <div class="details">
    <div class="hgrip"></div>
    <div class="tabs row1">
      <button class="tab t116"><svg><use href="#folder"/></svg>Dokumenty</button>
      <button class="tab t95"><svg><use href="#folder"/></svg>PW/RW</button>
      <button class="tab t108"><svg><use href="#clock"/></svg>Czynności</button>
      <button class="tab t77"><svg><use href="#flag"/></svg>Braki</button>
      <button class="tab t171"><svg><use href="#cubes"/></svg>Parametry produkcji</button>
    </div>
    <div class="tabs row2">
      <button class="tab on t136"><svg><use href="#tools"/></svg>Przebieg produkcji</button>
      <button class="tab t131"><svg><use href="#swap"/></svg>Zapotrzebowanie</button>
      <button class="tab t73"><svg><use href="#bulb"/></svg>Uwagi</button>
      <button class="tab t63"><svg><use href="#alarm"/></svg>RCP</button>
      <button class="tab t164"><svg><use href="#worker"/></svg>Przydzieleni pracownicy</button>
    </div>
    <div class="box">
      <div class="side"><svg class="i17"><use href="#edit"/></svg><svg class="i22"><use href="#doctool"/></svg><svg class="i22"><use href="#redgear"/></svg><hr></div>
      <div class="inner">
        <div class="grid tall">
        <table>
          <colgroup><col class="c12"><col class="c63"><col class="c100"><col class="c90"><col class="c100"><col class="c100"><col></colgroup>
          <thead><tr><th class="ind">✳</th><th class="sort">Lp</th><th>Nazwa etapu</th><th>Status</th><th>Postęp etapu</th><th>Użytkownik</th><th>Gniazdo</th></tr></thead>
          <tbody>
            <tr class="focus"><td class="ind cur"></td><td class="r">1</td><td>Krojenie</td><td class="c">Oczekuje</td><td class="pc"><div class="bar">0 %</div></td><td></td><td>Krojownia</td></tr>
            <tr><td class="ind"></td><td class="r">2</td><td>Szycie</td><td class="c">Oczekuje</td><td class="pc"><div class="bar">0 %</div></td><td></td><td>Szwalnia</td></tr>
            <tr><td class="ind"></td><td class="r">3</td><td>Tapicerowanie</td><td class="c">Oczekuje</td><td class="pc"><div class="bar">0 %</div></td><td></td><td>Tapicernia</td></tr>
          </tbody>
        </table>
        </div>
        <div class="hscroll"><i class="tri tl-a"></i><div class="thumb h4"></div><i class="tri tr-a"></i></div>
      </div>
      <div class="side"><svg class="i16"><use href="#list"/></svg></div>
    </div>
  </div>
  <div class="tip" role="tooltip">Nr seryjny / Nr partii</div>
  <div class="mark"></div>
  <svg class="arrow" viewBox="0 0 60 130" aria-hidden="true"><path d="M34 30L18 88 8 88 13 118 31 91 24 90 38 30z" fill="#f00"/><circle cx="35" cy="17" r="14" fill="#e02c2c" stroke="#f01010" stroke-width="2"/></svg>
  <div class="num">6</div>
</section>
</div>
</main>
</div>

<footer>
  <div class="f151">2016-03-14,&nbsp; 11:58:00</div><div class="f251">Numer licencji: 176/5691066210/30</div><div class="f201">MODUS v. 2.3.0.370 MAX iQ</div><div class="last">Copyright © 2005-2016 RHO Software<svg viewBox="0 0 12 12"><path d="M1 12L12 1M5 12l7-7M9 12l3-3" stroke="#8b919b" stroke-width="1.200"/></svg></div>
</footer>
</div>
</div>
</body>
</html>
```
FILE: styles.css
```css
* { box-sizing: border-box; }
html, body { margin: 0; height: 100%; }
body, button, input {
  font-family: "DejaVu Sans Condensed", "Noto Sans", sans-serif;
  font-size: 11px;
  line-height: 14px;
  color: #3b3b3b;
}
button { border: 0; background: none; padding: 0; white-space: nowrap; }
svg { display: block; flex: none; }
.defs { position: absolute; width: 0; height: 0; }
ul { list-style: none; margin: 0; padding: 0; }
a { color: inherit; text-decoration: none; }

.window {
  height: 100vh;
  display: flex;
  flex-direction: column;
  padding: 0 6px 6px;
  border: 1px solid #5f6573;
  background: linear-gradient(#eceef2, #e2e5e9 60px);
}
.titlebar { display: flex; align-items: center; height: 28px; padding: 4px 0 0 2px; }
.titlebar h1 { margin: 0 0 0 4px; font: 12px/16px Roboto, sans-serif; color: #4a4a4a; }
.i18 { width: 18px; height: 18px; }
.winbtns { margin-left: auto; display: flex; gap: 20px; padding-right: 8px; }
.winbtns svg { width: 12px; height: 12px; }

.frame {
  flex: 1;
  min-height: 0;
  display: flex;
  flex-direction: column;
  border: 1px solid #858b96;
  background: #e8ebf0;
}
.infobar {
  display: flex;
  height: 22px;
  background: linear-gradient(#fff 40%, #f0f1f4);
  border-bottom: 2px solid #8f949d;
}
.inf, .infobar button {
  display: flex;
  align-items: center;
  border-right: 1px solid #d5d7dc;
}
.inf { padding-left: 6px; gap: 12px; font: bold 12px/16px "Liberation Sans", sans-serif; color: #000; }
.inf svg { width: 16px; height: 14px; }
.infobar button { width: 30px; justify-content: center; }
.infobar button svg { width: 16px; height: 16px; }
.w200 { width: 200px; }
.w150 { width: 150px; }
.w250 { width: 250px; }
.grow { flex: 1; }

.body { flex: 1; min-height: 0; display: flex; }
.sidebar { width: 186px; display: flex; flex-direction: column; }
.notice {
  margin: 3px 2px 0;
  height: 21px;
  background: #ff0;
  color: #111;
  font-weight: bold;
  font-size: 13px;
  line-height: 22px;
  text-align: center;
}
.navwrap { flex: 1; min-height: 0; display: flex; margin-top: 2px; overflow: hidden; }
nav { flex: 1; display: flex; flex-direction: column; gap: 4px; padding: 11px 15px 0 14px; }
.group {
  flex: none;
  display: flex;
  align-items: center;
  height: 23px;
  padding: 0 6px 0 7px;
  gap: 5px;
  border: 1px solid #9ea6b3;
  box-shadow: inset 0 0 0 1px #f3f5f8;
  background: linear-gradient(#dfe3e8, #ccd2d9 50%, #e3e7ec);
  font-weight: bold;
  color: #333;
}
.group.first { margin-bottom: 16px; }
.group svg { width: 20px; height: 20px; }
.group .chev { width: 9px; height: 9px; margin-left: auto; }
.chev.up { transform: rotate(180deg); }
nav ul { margin: 5px 0 7px; }
nav li a { display: flex; align-items: center; height: 28px; gap: 7px; padding-left: 12px; white-space: nowrap; }
nav li svg { width: 20px; height: 20px; }
.vscroll {
  width: 16px;
  display: flex;
  flex-direction: column;
  align-items: center;
  padding: 6px 0;
  background: linear-gradient(90deg, #eef0f3, #fff);
}
.vthumb {
  width: 15px;
  height: 328px;
  margin: 7px 0 auto;
  border: 1px solid #a6adb8;
  border-radius: 2px;
  background: repeating-linear-gradient(#707887 0 1px, transparent 1px 2px) center/7px 7px no-repeat, linear-gradient(90deg, #fafbfc, #e2e5e9);
}
.tri { flex: none; width: 0; height: 0; border: 5px solid transparent; }
.tu { border-top: 0; border-bottom-color: #4c4f55; }
.td { border-bottom: 0; border-top-color: #4c4f55; }
.tl-a { border-left: 0; border-right-color: #4c4f55; }
.tr-a { border-right: 0; border-left-color: #4c4f55; }
.check { display: flex; align-items: center; gap: 5px; font-weight: bold; color: #111; white-space: nowrap; }
.check.one { height: 22px; padding: 0 0 1px 3px; }
.check input {
  appearance: none;
  flex: none;
  width: 13px;
  height: 13px;
  margin: 0;
  border: 1px solid #8b93a1;
  background: #f4f5f7;
}
.check input:checked::after {
  content: "";
  display: block;
  width: 4px;
  height: 8px;
  margin: 0 0 0 4px;
  border: solid #333;
  border-width: 0 2px 2px 0;
  transform: rotate(40deg);
}
.vgrip { width: 6px; background: repeating-linear-gradient(#9aa0ab 0 2px, transparent 2px 4px) 3px 50%/2px 14px no-repeat; }

main { flex: 1; min-width: 0; display: flex; flex-direction: column; padding: 1px 3px 6px 0; }
.tabstrip { display: flex; height: 27px; border-bottom: 1px solid #a3a9b5; }
.doctab {
  display: flex;
  align-items: center;
  gap: 8px;
  height: 27px;
  margin-left: 3px;
  padding: 0 9px 0 11px;
  border: 1px solid #a3a9b5;
  border-bottom: 0;
  background: #fff;
  font: 11px/14px "Liberation Sans", sans-serif;
}
.doctab svg, .tabend svg { width: 10px; height: 10px; }
.tabend { margin-left: auto; display: flex; align-items: center; gap: 14px; padding: 0 3px 8px 0; }
.panels {
  flex: 1;
  min-height: 0;
  display: flex;
  border: 1px solid #a3a9b5;
  border-top: 0;
  padding: 1px 1px 0;
  box-shadow: 2px 2px 2px #c9cdd5;
  background: #fff;
}
.panel { display: flex; flex-direction: column; min-width: 0; background: #e8ebf0; }
.left { flex: 433 1 0; }
.right { flex: 584 1 0; position: relative; border-left: 3px solid #c0c0c0; }
.panel h2 {
  align-self: flex-start;
  margin: 4px 0 0 1px;
  padding: 0 2px;
  border: 1px solid #a9b0be;
  font-size: 11px;
  line-height: 14px;
  color: #000;
}

.toolbar { display: flex; flex: none; }
.toolbar.tl { height: 47px; padding-top: 3px; }
.toolbar.tr { height: 45px; padding-left: 1px; }
.tb {
  display: flex;
  flex-direction: column;
  align-items: center;
  overflow: hidden;
  margin-bottom: 1px;
  padding-top: 6px;
  gap: 1px;
  border-radius: 3px;
  font: 11px/14px "Liberation Sans", sans-serif;
  color: #111;
}
.tb svg { width: 18px; height: 17px; }
.hot { background: linear-gradient(#e3e8ee 25%, #fdfdfe 26%, #eaf0f5); border: 1px solid #fff; padding-top: 5px; margin-bottom: 2px; }
.sep { width: 1px; margin: 0 1px 1px 2px; background: #a3a6ac; }
.w30 { width: 30px; }
.w32 { width: 32px; }
.w34 { width: 34px; }
.w38 { width: 38px; }
.w50 { width: 50px; }
.w56 { width: 56px; }
.w58 { width: 58px; }
.find { margin-left: auto; display: flex; padding: 4px 4px 0 0; }
.find input { width: 148px; height: 32px; border: 1px solid #6b6b6b; background: #f0f0f0; margin-right: 1px; }
.find button { display: flex; align-items: center; justify-content: center; width: 27px; height: 32px; border: 1px solid #d8dadd; border-radius: 3px; background: #eceef1; }
.find .gb { border-color: #c5913f; background: linear-gradient(#ffdc85, #ffe69a); }
.find svg { width: 18px; height: 18px; }
.clip { width: 65px; height: 42px; overflow: hidden; margin-left: 1px; }
.toolbar .clip + .tb { width: 60px; }

.grid { flex: 1; min-height: 0; overflow: hidden; }
table { width: 100%; table-layout: fixed; border-collapse: separate; border-spacing: 0; }
th, td { height: 18px; padding: 0 3px 0 1px; overflow: hidden; white-space: nowrap; text-align: left; line-height: 16px; }
td { line-height: 17px; }
th {
  font-weight: normal;
  border: solid #a3a9b5;
  border-width: 1px 1px 1px 0;
  background: linear-gradient(#fbfbfd, #edf0f4);
}
.left > .grid th { height: 19px; }
td { border-right: 1px solid #dadde3; }
tbody tr:nth-child(odd) { background: #f2f5fb; }
tbody tr:nth-child(even) { background: #fbfaf1; }
tbody tr:last-child td { border-bottom: 1px solid #dadde3; }
th:last-child, td:last-child { border-right: 0; }
th.ind, td.ind, tbody tr:last-child td.ind { border: solid #a3a9b5; border-width: 0 1px 1px; padding: 0; background: #f1f3f6; }
th.ind { border-top-width: 1px; color: #777; text-align: center; font-size: 9px; }
td.cur::before { content: ""; display: block; margin-left: 4px; width: 0; height: 0; border: 4px solid transparent; border-left-color: #6e7480; border-right: 0; }
th.cut, td.cut { padding-left: 0; }
.r { text-align: right; }
td.c { text-align: center; }
.st svg { display: inline-block; vertical-align: middle; width: 16px; height: 16px; margin: -2px 3px 0 2px; }
.focus { color: #000; }
tbody .focus.focus { background: #e9ebee; }
tbody .sel.sel { background: linear-gradient(#c9d5e3, #e8f0f9); color: #000; }
.sel td:not(.ind) { border-bottom: 1px dotted #000; }
td.pc { padding: 0; line-height: 15px; vertical-align: top; }
.bar {
  height: 17px;
  border: 1px solid #a3a9b5;
  box-shadow: inset 0 0 0 1px #fff;
  background: linear-gradient(#e6e8eb, #dfe2e6 50%, #f3f4f6);
  text-align: center;
  color: #3b3b3b;
}
.bar.third { background: linear-gradient(#bccbdb, #d6e0eb) 0 0/31% 100% no-repeat, linear-gradient(#e6e8eb, #dfe2e6 50%, #f3f4f6); box-shadow: none; }
.tall th, .tall td { height: 19px; }
.tall .bar { height: 18px; }
.sort::after { content: ""; float: right; margin: 6px 2px 0 0; border: 4px solid transparent; border-top: 0; border-bottom-color: #111; }
.c12 { width: 12px; }
.c40 { width: 40px; }
.c47 { width: 47px; }
.c63 { width: 63px; }
.c80 { width: 80px; }
.c90 { width: 90px; }
.c91 { width: 91px; }
.c98 { width: 98px; }
.c100 { width: 100px; }
.c112 { width: 112px; }
.c113 { width: 113px; }
.c150 { width: 150px; }

.sum { flex: none; display: flex; align-items: center; height: 32px; border-top: 1px solid #a3a9b5; background: linear-gradient(#f5f7f9, #edf0f3); }
.sum span { height: 19px; line-height: 19px; padding-right: 5px; border-right: 1px solid #a3a9b5; text-align: right; }
.s1 { width: 255px; }
.s2 { width: 90px; }
.sum .s3 { width: 90px; padding-right: 18px; }
.sum .s4 { width: 160px; padding-left: 23px; text-align: left; }
.hscroll { flex: none; display: flex; align-items: center; height: 16px; padding: 0 6px; background: linear-gradient(#eff0f2, #fff); }
.hscroll .tr-a { margin-left: auto; }
.thumb {
  height: 15px;
  border: 1px solid #a6adb8;
  border-radius: 2px;
  background: repeating-linear-gradient(90deg, #707887 0 1px, transparent 1px 2px) center/8px 7px no-repeat, linear-gradient(#fafbfc, #e2e5e9);
}
.h1 { width: 103px; margin-left: 80px; }
.h2 { width: 223px; margin-left: 6px; }
.h3 { width: 66px; margin-left: 6px; }
.h4 { width: 156px; margin-left: 6px; }
.hide {
  height: 17px;
  border: 1px solid #a9b6c4;
  border-radius: 3px;
  background: linear-gradient(#f8fafc, #e2e8ee);
  font-weight: bold;
  font-size: 12px;
}
.details { flex: none; height: 200px; display: flex; flex-direction: column; background: #fff; padding-bottom: 5px; }
.left .details { padding-right: 4px; }
.right .details { padding-right: 3px; }
.hgrip { flex: none; height: 9px; background: repeating-linear-gradient(90deg, #9aa0ab 0 2px, transparent 2px 4px) center 3px/14px 2px no-repeat; }
.tabs { display: flex; flex: none; align-items: flex-end; position: relative; }
.one-row { height: 26px; margin: 0 0 -1px 4px; }
.row1 { height: 25px; margin: 0 6px 0 5px; }
.row2 { height: 27px; margin: -1px 6px -1px 4px; }
.tab {
  display: flex;
  align-items: center;
  justify-content: center;
  gap: 6px;
  height: 25px;
  border: 1px solid #a3a9b5;
  border-left-width: 0;
  background: linear-gradient(#dadde2, #ced2d8);
}
.tab:first-child { border-left-width: 1px; }
.tab svg { width: 16px; height: 16px; }
.tab.on { height: 27px; border-bottom: 0; background: #fff; }
.w125 { width: 125px; }
.w68 { width: 68px; }
.t63 { flex: 63 1 0; }
.t73 { flex: 73 1 0; }
.t77 { flex: 77 1 0; }
.t95 { flex: 95 1 0; }
.t108 { flex: 108 1 0; }
.t116 { flex: 116 1 0; }
.t131 { flex: 131 1 0; }
.t136 { flex: 136 1 0; }
.t164 { flex: 164 1 0; }
.t171 { flex: 171 1 0; }
.box { flex: 1; min-height: 0; display: flex; border: 1px solid #a3a9b5; padding: 1px; box-shadow: 1px 1px 2px #d0d4da; }
.side { width: 32px; display: flex; flex-direction: column; align-items: center; gap: 5px; padding-top: 6px; background: #e8ebf0; }
.side hr { width: 31px; margin: 0; border: 0; border-top: 1px solid #a3a9b5; }
.i16 { width: 16px; height: 16px; }
.i17 { width: 17px; height: 17px; }
.i22 { width: 22px; height: 22px; }
.i24 { width: 24px; height: 22px; }
.inner { flex: 1; min-width: 0; display: flex; flex-direction: column; background: #e8ebf0; }

.tip {
  position: absolute;
  left: 9px;
  top: 44px;
  height: 19px;
  padding: 0 3px;
  line-height: 19px;
  background: linear-gradient(#fff, #e6e8f2);
  box-shadow: 3px 3px 3px #70747c;
  color: #222;
}
.mark {
  position: absolute;
  left: 10px;
  right: 0;
  top: 207px;
  height: 37px;
  border: 2px solid #ee1212;
  border-radius: 5px;
  box-shadow: 2px 4px 5px #8886, inset 2px 3px 4px #8884;
}
.arrow { position: absolute; left: 211px; top: 79px; width: 60px; height: 130px; filter: drop-shadow(3px 3px 3px #7778); }
.num { position: absolute; left: 232px; top: 79px; width: 28px; height: 34px; line-height: 34px; text-align: center; color: #fff; font-size: 14px; }

footer { display: flex; flex: none; gap: 3px; height: 19px; background: #e8ebf0; }
footer div {
  border: 1px solid #9b9ea5;
  border-right-color: #fff;
  border-bottom-color: #fff;
  background: #f0f0f0;
  font-weight: bold;
  line-height: 17px;
  color: #000;
  text-align: center;
  white-space: nowrap;
}
.f151 { width: 151px; }
.f251 { width: 251px; }
.f201 { width: 201px; }
footer .last { flex: 1; display: flex; justify-content: space-between; align-items: flex-end; padding-left: 2px; }
footer svg { width: 12px; height: 12px; }
```
